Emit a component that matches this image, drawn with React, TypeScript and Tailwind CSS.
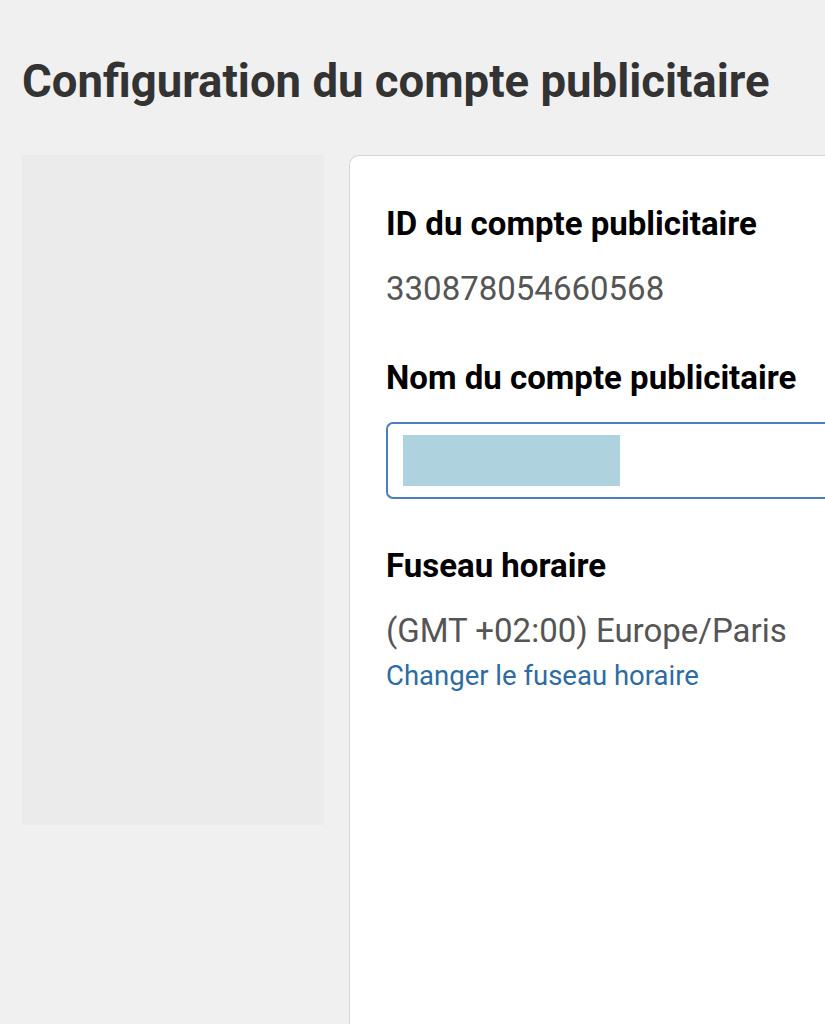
export default function App() {
  return (
    <div
      className="min-h-screen h-[1024px] overflow-hidden bg-[#f0f0f0]"
      style={{ fontFamily: "Roboto, 'Noto Sans', sans-serif" }}
    >
      {/* Page title */}
      <h1 className="pl-[22px] pt-[52px] text-[45.5px] leading-[60px] font-bold text-[#333333] whitespace-nowrap">
        Configuration du compte publicitaire
      </h1>

      <div className="mt-[43px] flex items-start gap-[25px] pl-[22px]">
        {/* Left nav placeholder */}
        <div className="w-[302px] h-[670px] shrink-0 bg-[#ebebeb]" />

        {/* Settings card */}
        <div className="flex-1 h-[900px] bg-white border border-[#d4d4d4] border-r-0 rounded-tl-[10px] pl-[36px] pt-[50px]">
          <section>
            <h2 className="text-[33px] leading-[36px] font-bold text-black whitespace-nowrap">
              ID du compte publicitaire
            </h2>
            <p className="mt-[29px] text-[33px] leading-[36px] text-[#555555]">330878054660568</p>
          </section>

          <section className="mt-[53px]">
            <h2 className="text-[33px] leading-[36px] font-bold text-black whitespace-nowrap">
              Nom du compte publicitaire
            </h2>
            <div className="mt-[26px] h-[77px] border-2 border-r-0 border-[#4a7ec0] rounded-l-[7px] flex items-center pl-[15px]">
              <div className="w-[217px] h-[51px] bg-[#aed3df]" />
            </div>
          </section>

          <section className="mt-[49px]">
            <h2 className="text-[33px] leading-[36px] font-bold text-black whitespace-nowrap">
              Fuseau horaire
            </h2>
            <p className="mt-[29px] text-[33px] leading-[36px] text-[#555555] whitespace-nowrap">
              (GMT +02:00) Europe/Paris
            </p>
            <a className="block mt-[11px] text-[27.5px] leading-[32px] text-[#2d6ca2] whitespace-nowrap cursor-pointer">
              Changer le fuseau horaire
            </a>
          </section>
        </div>
      </div>
    </div>
  );
}
